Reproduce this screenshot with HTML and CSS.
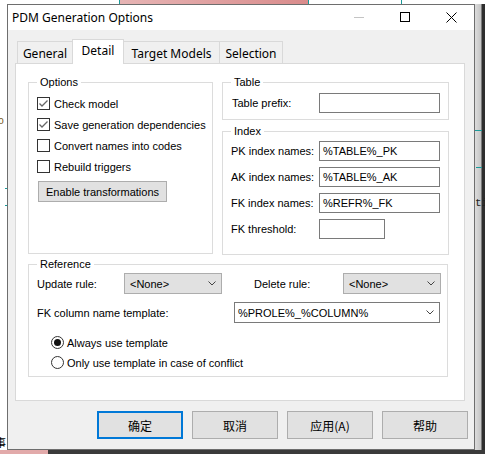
FILE: index.html
```html
<!DOCTYPE html>
<html>
<head>
<meta charset="utf-8">
<link rel="stylesheet" href="styles.css">
</head>
<body>
<div class="desktop">
  <div class="bg-topbar"></div>
  <div class="bg-tline t1"></div>
  <div class="bg-tline t2"></div>
  <div class="bg-tline t3"></div>
  <div class="bg-left-o">o</div>
  <div class="bg-tick k1"></div>
  <div class="bg-tick k2"></div>
  <div class="bg-right"></div>
  <div class="bg-rline r1"></div>
  <div class="bg-rline r2"></div>
  <div class="bg-right-ti">ti</div>
  <div class="bg-bottom"></div>
  <div class="bg-left-char">事</div>

  <div class="window">
    <div class="titlebar">
      <span class="title">PDM Generation Options</span>
      <div class="caption">
        <div class="cap-btn"><svg width="11" height="11" viewBox="0 0 11 11"><line x1="0" y1="5.5" x2="10" y2="5.5" stroke="#c4c4c4" stroke-width="1"/></svg></div>
        <div class="cap-btn"><svg width="11" height="11" viewBox="0 0 11 11"><rect x="0.5" y="0.5" width="9" height="9" fill="none" stroke="#000" stroke-width="1"/></svg></div>
        <div class="cap-btn"><svg width="11" height="11" viewBox="0 0 11 11"><path d="M0.5 0.5 L10.5 10.5 M10.5 0.5 L0.5 10.5" stroke="#000" stroke-width="1"/></svg></div>
      </div>
    </div>
    <div class="client">
      <div class="tabs">
        <div class="tab t-general">General</div>
        <div class="tab t-detail active">Detail</div>
        <div class="tab t-target">Target Models</div>
        <div class="tab t-selection">Selection</div>
      </div>
      <div class="panel">
        <div class="top">
          <div class="group options">
            <span class="legend">Options</span>
            <div class="check-row"><span class="cb"><svg width="11" height="11" viewBox="0 0 11 11"><path d="M1.5 5.5 L4 8 L9.5 2.5" fill="none" stroke="#666" stroke-width="1.3"/></svg></span><span>Check model</span></div>
            <div class="check-row"><span class="cb"><svg width="11" height="11" viewBox="0 0 11 11"><path d="M1.5 5.5 L4 8 L9.5 2.5" fill="none" stroke="#666" stroke-width="1.3"/></svg></span><span>Save generation dependencies</span></div>
            <div class="check-row"><span class="cb"></span><span>Convert names into codes</span></div>
            <div class="check-row"><span class="cb"></span><span>Rebuild triggers</span></div>
            <div class="btn-enable">Enable transformations</div>
          </div>
          <div class="right-col">
            <div class="group table-g">
              <span class="legend">Table</span>
              <div class="field"><span class="label">Table prefix:</span><span class="input"></span></div>
            </div>
            <div class="group index-g">
              <span class="legend">Index</span>
              <div class="field"><span class="label">PK index names:</span><span class="input">%TABLE%_PK</span></div>
              <div class="field"><span class="label">AK index names:</span><span class="input">%TABLE%_AK</span></div>
              <div class="field"><span class="label">FK index names:</span><span class="input">%REFR%_FK</span></div>
              <div class="field"><span class="label">FK threshold:</span><span class="input short"></span></div>
            </div>
          </div>
        </div>
        <div class="group reference">
          <span class="legend">Reference</span>
          <div class="ref-row">
            <span class="ref-label">Update rule:</span>
            <span class="select"><span>&lt;None&gt;</span><svg width="8" height="5" viewBox="0 0 8 5"><path d="M0.5 0.5 L4 4 L7.5 0.5" fill="none" stroke="#444" stroke-width="1"/></svg></span>
            <span class="ref-label del">Delete rule:</span>
            <span class="select"><span>&lt;None&gt;</span><svg width="8" height="5" viewBox="0 0 8 5"><path d="M0.5 0.5 L4 4 L7.5 0.5" fill="none" stroke="#444" stroke-width="1"/></svg></span>
          </div>
          <div class="ref-row fk">
            <span class="fk-label">FK column name template:</span>
            <span class="combo"><span>%PROLE%_%COLUMN%</span><svg width="8" height="5" viewBox="0 0 8 5"><path d="M0.5 0.5 L4 4 L7.5 0.5" fill="none" stroke="#444" stroke-width="1"/></svg></span>
          </div>
          <div class="radio-row first"><span class="radio on"></span><span>Always use template</span></div>
          <div class="radio-row"><span class="radio"></span><span>Only use template in case of conflict</span></div>
        </div>
      </div>
      <div class="buttons">
        <div class="btn default">确定</div>
        <div class="btn">取消</div>
        <div class="btn">应用(A)</div>
        <div class="btn">帮助</div>
      </div>
    </div>
  </div>
</div>
</body>
</html>
```

FILE: styles.css
```css
* { box-sizing: border-box; }
html, body { margin: 0; padding: 0; }
body {
  width: 485px;
  height: 454px;
  overflow: hidden;
  background: #fff;
  font-family: "Liberation Sans", Arial, sans-serif;
  font-size: 11px;
  color: #000;
}
.desktop { position: relative; width: 485px; height: 454px; overflow: hidden; background: #fff; }

/* background desktop fragments */
.bg-topbar { position: absolute; left: 120px; top: 0; width: 188px; height: 4px; background: linear-gradient(90deg, #e6b4b4, #d98c8c); }
.bg-tline { position: absolute; top: 0; width: 1px; height: 4px; background: #1a9a9a; }
.bg-tline.t1 { left: 119px; }
.bg-tline.t2 { left: 308px; }
.bg-tline.t3 { left: 401px; }
.bg-left-o { position: absolute; left: -2px; top: 116px; font-size: 10px; color: #7a5a20; font-family: "Liberation Mono", monospace; }
.bg-tick { position: absolute; left: 5px; width: 2px; height: 1px; background: #1a9a9a; }
.bg-tick.k1 { top: 188px; }
.bg-tick.k2 { top: 205px; }
.bg-right { position: absolute; left: 475px; top: 4px; width: 10px; height: 450px; background: linear-gradient(90deg, #dcdcdc 0, #c4c4c4 6px, #2e2e2e 7px, #2e2e2e 10px); }
.bg-rline { position: absolute; height: 1px; background: #1a9a9a; }
.bg-rline.r1 { left: 475px; top: 130px; width: 7px; }
.bg-rline.r2 { left: 476px; top: 167px; width: 6px; }
.bg-right-ti { position: absolute; left: 475px; top: 197px; font-family: "Liberation Mono", monospace; font-size: 11px; color: #222; }
.bg-bottom { position: absolute; left: 0; top: 450px; width: 485px; height: 4px; background: linear-gradient(90deg, #e2aaaa 0, #e2aaaa 48px, #3a3a3a 48px); }
.bg-left-char { position: absolute; left: -5px; top: 436px; font-family: "Noto Sans CJK SC", sans-serif; font-size: 11px; line-height: 13px; }

/* window */
.window {
  position: absolute;
  left: 7px;
  top: 4px;
  width: 468px;
  height: 446px;
  border: 1px solid #6e6e6e;
  background: #f0f0f0;
  display: flex;
  flex-direction: column;
}
.titlebar { height: 25px; background: #fff; display: flex; align-items: center; flex: none; }
.title { font-family: "Noto Sans", sans-serif; font-size: 12px; margin-left: 4px; }
.caption { margin-left: auto; display: flex; height: 25px; }
.cap-btn { width: 46px; height: 25px; display: flex; align-items: center; justify-content: center; }

.client { flex: 1; padding: 9px 0 0 7px; }

.tabs { display: flex; align-items: flex-end; height: 24px; margin-left: 2px; }
.tab {
  height: 22px;
  border: 1px solid #d9d9d9;
  border-bottom: none;
  margin-left: -1px;
  background: #f0f0f0;
  font-family: "Noto Sans", sans-serif;
  font-size: 12px;
  display: flex;
  align-items: center;
  justify-content: center;
  padding-top: 1px;
}
.t-general { width: 56px; margin-left: 0; }
.t-detail { width: 52px; }
.t-target { width: 97px; }
.t-selection { width: 64px; }
.tab.active { height: 25px; background: #fff; margin-bottom: -1px; position: relative; z-index: 1; padding-top: 0; padding-bottom: 3px; }

.panel {
  width: 450px;
  height: 338px;
  border: 1px solid #d9d9d9;
  background: #fff;
  padding: 18px 0 0 12px;
}
.top { display: flex; gap: 9px; }

.group { border: 1px solid #dcdcdc; position: relative; }
.legend { position: absolute; top: -7px; left: 8px; padding: 0 3px; background: #fff; line-height: 13px; }

.options { width: 185px; height: 172px; padding: 14px 0 0 8px; }
.check-row { display: flex; align-items: center; height: 13px; margin-bottom: 8px; gap: 4px; white-space: nowrap; }
.cb { width: 13px; height: 13px; border: 1px solid #333; background: #fff; flex: none; display: flex; }
.btn-enable {
  margin: 2px 0 0 1px;
  width: 129px;
  height: 21px;
  border: 1px solid #adadad;
  background: #e1e1e1;
  display: flex;
  align-items: center;
  justify-content: center;
}

.right-col { width: 227px; display: flex; flex-direction: column; gap: 11px; }
.table-g { height: 38px; padding: 10px 0 0 9px; }
.index-g { height: 124px; padding: 9px 0 0 8px; display: flex; flex-direction: column; gap: 6px; }
.field { display: flex; align-items: center; height: 20px; }
.table-g .label { width: 87px; }
.index-g .label { width: 88px; }
.input {
  width: 121px;
  height: 20px;
  border: 1px solid #7a7a7a;
  background: #fff;
  padding-left: 3px;
  display: flex;
  align-items: center;
}
.input.short { width: 66px; }

.reference { width: 420px; height: 113px; margin-top: 9px; padding: 8px 0 0 8px; }
.ref-row { display: flex; align-items: center; height: 21px; }
.ref-label { width: 87px; }
.ref-label.del { width: 89px; margin-left: 32px; }
.select {
  width: 98px;
  height: 21px;
  border: 1px solid #adadad;
  background: #e1e1e1;
  display: flex;
  align-items: center;
  justify-content: space-between;
  padding: 0 5px 0 5px;
}
.ref-row.fk { margin-top: 8px; }
.fk-label { width: 197px; }
.combo {
  width: 206px;
  height: 21px;
  border: 1px solid #7a7a7a;
  background: #fff;
  display: flex;
  align-items: center;
  justify-content: space-between;
  padding: 0 5px 0 3px;
}
.radio-row { display: flex; align-items: center; height: 13px; margin: 7px 0 0 14px; gap: 3px; white-space: nowrap; }
.radio-row.first { margin-top: 13px; }
.radio { width: 13px; height: 13px; border: 1px solid #333; border-radius: 50%; background: #fff; flex: none; display: flex; align-items: center; justify-content: center; }
.radio.on::after { content: ""; width: 7px; height: 7px; border-radius: 50%; background: #111; }

.buttons { display: flex; gap: 9px; margin: 10px 0 0 82px; }
.btn {
  width: 86px;
  height: 28px;
  border: 1px solid #adadad;
  background: #e1e1e1;
  display: flex;
  align-items: center;
  justify-content: center;
  font-family: "Noto Sans CJK SC", "Liberation Sans", sans-serif;
  font-size: 12px;
}
.btn.default { border: 2px solid #0078d7; }
```
